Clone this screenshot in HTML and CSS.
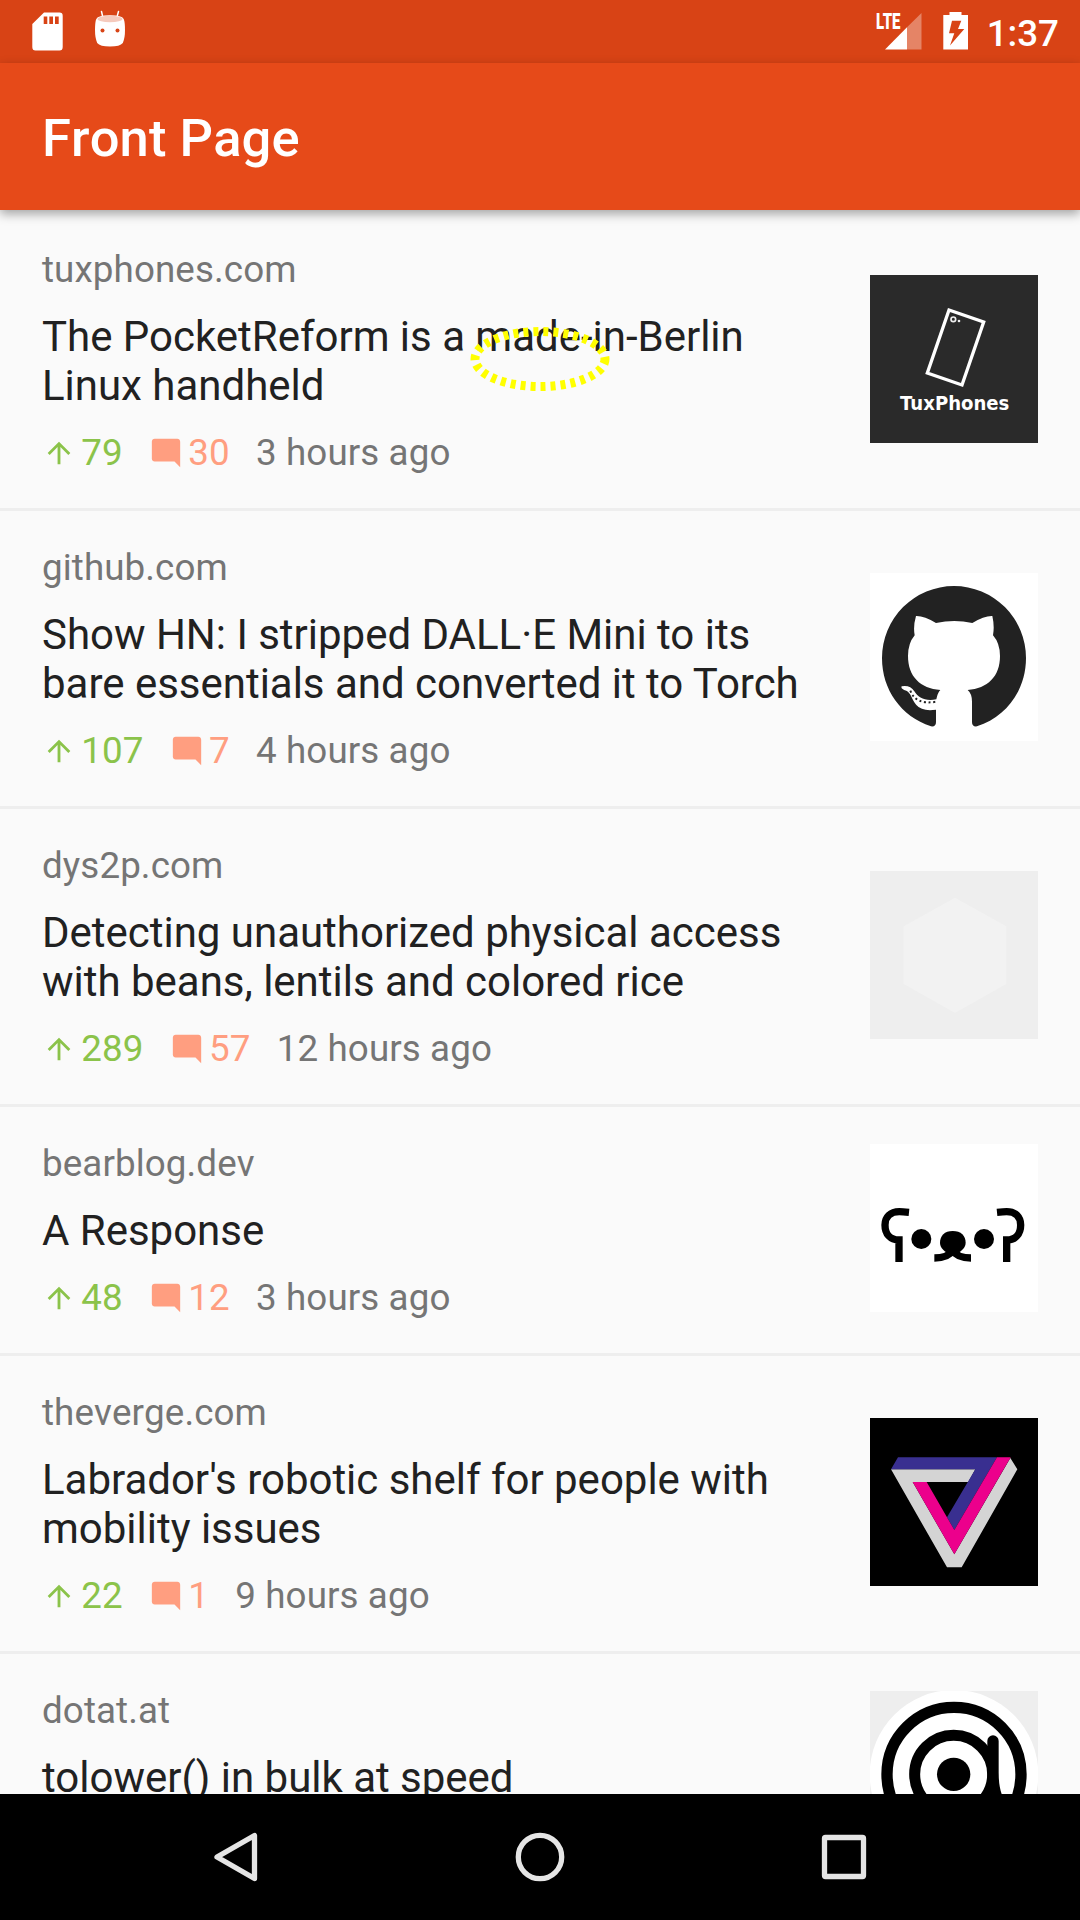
FILE: index.html
```html
<!DOCTYPE html>
<html lang="en">
<head>
<meta charset="utf-8">
<title>Front Page</title>
<link rel="stylesheet" href="styles.css">
</head>
<body>
<svg class="defs" aria-hidden="true">
  <symbol id="up" viewBox="0 0 24 24"><path d="M4 12l1.41 1.41L11 7.83V20h2V7.83l5.58 5.59L20 12l-8-8-8 8z"/></symbol>
  <symbol id="comment" viewBox="0 0 24 24"><path d="M4 2C2.900 2 2 2.900 2 4v12c0 1.100.9 2 2 2h14l4 4V4c0-1.100-.9-2-2-2z"/></symbol>
</svg>
<div class="screen">
  <header class="status">
    <div class="status-left">
      <svg class="sd" viewBox="0 0 31 39"><path fill="#fff" fill-rule="evenodd" d="M12 .5H27.500Q30.700.5 30.700 3.700V35Q30.700 38.500 27.500 38.500H3.500Q.3 38.500.3 35V12ZM11.700 4.500V12H15.300V4.500ZM17.300 4.500V12H21V4.500ZM23 4.500V12H26.700V4.500Z"/></svg>
      <svg class="droid" viewBox="0 0 32 37"><path stroke="#fff" stroke-width="1.500" stroke-linecap="round" d="M7.500 1.500 9 8M24.500 1.500 22.700 8"/><path fill="#fff" d="M2.300 9Q4 5.300 16 5.300T29.700 9Q31 12 31 20T28.800 33Q26 36.500 16 36.500T3.200 33Q1 28 1 20T2.300 9Z"/><ellipse cx="16" cy="9" rx="12.500" ry="3.200" fill="#f5cabd"/><circle cx="8.500" cy="20.500" r="2" fill="#d84315"/><circle cx="23.500" cy="20.500" r="2" fill="#d84315"/></svg>
    </div>
    <div class="status-right">
      <svg class="signal" viewBox="0 0 48 40"><text class="lte" x="0" y="17" textLength="24.500" lengthAdjust="spacingAndGlyphs">LTE</text><path fill="#fff" fill-opacity=".35" d="M31 15.300 45.500 1V37.500H31Z"/><path fill="#fff" d="M9 37.500 31 15.300V37.500Z"/></svg>
      <svg class="battery" viewBox="0 0 26 39"><path fill="#fff" fill-rule="evenodd" d="M6.500 1H18.500V4H25V38.500H.3V4H6.500ZM9 9.700H18.300L15 18H21.300L7 34.500 11.300 22.300H6Z"/></svg>
      <span class="clock">1:37</span>
    </div>
  </header>
  <div class="appbar"><h1>Front Page</h1></div>
  <main class="list">
    <article class="item">
      <div class="body">
        <div class="domain">tuxphones.com</div>
        <h2>The PocketReform is a made-in-Berlin<br>Linux handheld</h2>
        <div class="meta"><span class="stat votes"><svg><use href="#up"/></svg>79</span><span class="stat comments"><svg><use href="#comment"/></svg>30</span><span>3 hours ago</span></div>
      </div>
      <svg class="thumb" viewBox="60 45 504 504"><rect x="60" y="45" width="504" height="504" fill="#2a2a2a"/><path fill="none" stroke="#fff" stroke-width="10" d="M297 150 401 186 336 375 232 339Z"/><circle cx="310" cy="178" r="7" fill="none" stroke="#eee" stroke-width="5"/><circle cx="327" cy="183" r="4" fill="#eee"/><text class="tux" x="150" y="450" textLength="328" lengthAdjust="spacingAndGlyphs">TuxPhones</text></svg>
    </article>
    <article class="item">
      <div class="body">
        <div class="domain">github.com</div>
        <h2>Show HN: I stripped DALL·E Mini to its<br>bare essentials and converted it to Torch</h2>
        <div class="meta"><span class="stat votes"><svg><use href="#up"/></svg>107</span><span class="stat comments"><svg><use href="#comment"/></svg>7</span><span>4 hours ago</span></div>
      </div>
      <svg class="thumb" viewBox="60 39 504 504"><rect x="60" y="39" width="504" height="504" fill="#fff"/><path fill="#222" d="M243 499C153 469 96 389 96 294A216 216 0 0 1 528 294C528 389 471 469 381 499Q366 501 366 486V425Q366 401 353 390C413 385 450 350 450 288Q450 250 429 226Q434 199 427 168Q403 167 367 189Q313 177 258 189Q222 167 198 168Q189 199 194 226Q174 250 174 288C174 350 211 385 271 390Q263 398 259 418C225 424 204 413 193 394Q180 374 155 379Q151 386 169 392C183 398 186 420 199 435Q216 455 258 449V486Q258 501 243 499Z"/><path fill="none" stroke="#222" stroke-width="6" stroke-dasharray="6 8" d="M181 392Q197 436 259 425"/></svg>
    </article>
    <article class="item">
      <div class="body">
        <div class="domain">dys2p.com</div>
        <h2>Detecting unauthorized physical access<br>with beans, lentils and colored rice</h2>
        <div class="meta"><span class="stat votes"><svg><use href="#up"/></svg>289</span><span class="stat comments"><svg><use href="#comment"/></svg>57</span><span>12 hours ago</span></div>
      </div>
      <svg class="thumb" viewBox="60 33 504 504"><rect x="60" y="33" width="504" height="504" fill="#eee"/><path fill="#f2f2f2" d="M315 113 469 199V372L315 459 161 372V199Z"/></svg>
    </article>
    <article class="item short">
      <div class="body">
        <div class="domain">bearblog.dev</div>
        <h2>A Response</h2>
        <div class="meta"><span class="stat votes"><svg><use href="#up"/></svg>48</span><span class="stat comments"><svg><use href="#comment"/></svg>12</span><span>3 hours ago</span></div>
      </div>
      <svg class="thumb" viewBox="60 42 504 504"><rect x="60" y="42" width="504" height="504" fill="#fff"/><g fill="none" stroke="#000" stroke-width="22"><path d="M177 247C167 246 157 245 148 245C121 245 105 261 105 285C105 312 121 330 147 330V396"/><path d="M441 247C451 246 461 245 470 245C497 245 512 261 512 285C512 312 496 330 470 330V396"/><path d="M253 384C285 384 299 376 308 361C317 376 331 384 363 384"/></g><circle cx="214" cy="327" r="30"/><circle cx="402" cy="327" r="30"/><path d="M308 303C333 303 347 317 347 338C347 352 335 366 308 376C281 366 270 352 270 338C270 317 284 303 308 303Z"/></svg>
    </article>
    <article class="item">
      <div class="body">
        <div class="domain">theverge.com</div>
        <h2>Labrador's robotic shelf for people with<br>mobility issues</h2>
        <div class="meta"><span class="stat votes"><svg><use href="#up"/></svg>22</span><span class="stat comments"><svg><use href="#comment"/></svg>1</span><span>9 hours ago</span></div>
      </div>
      <svg class="thumb" viewBox="60 54 504 504"><rect x="60" y="54" width="504" height="504"/><path fill="#d4d4d4" d="M123 208H376L355 246H188L313 463 481 174 502 208 335 502H291Z"/><path fill="#392f90" d="M144 172H441L313 390 291 352 376 208H123Z"/><path fill="#ec008c" d="M441 172H482L313 463 188 246H230L313 390Z"/></svg>
    </article>
    <article class="item short">
      <div class="body">
        <div class="domain">dotat.at</div>
        <h2>tolower() in bulk at speed</h2>
        <div class="meta"></div>
      </div>
      <svg class="thumb" viewBox="60 63 504 504"><rect x="60" y="63" width="504" height="504" fill="#eee"/><circle cx="312" cy="313" r="253" fill="#fff"/><circle cx="311" cy="313" r="50"/><g fill="none" stroke="#000" stroke-width="33"><circle cx="311" cy="313" r="117"/><circle cx="312" cy="313" r="201" stroke-width="34"/><path stroke-linecap="round" stroke-width="34" d="M429 213V313Q430 370 450 400"/></g></svg>
    </article>
  </main>
  <nav class="nav">
    <svg viewBox="0 0 54 54"><path d="M45.500 5.500V48.500L8 27Z"/></svg>
    <svg viewBox="0 0 54 54"><circle cx="27" cy="27" r="21.700"/></svg>
    <svg viewBox="0 0 54 54"><rect x="7.500" y="7.500" width="39" height="39" rx="1"/></svg>
  </nav>
  <svg class="marker" viewBox="0 0 140 66"><ellipse cx="70" cy="33" rx="65" ry="27.500"/></svg>
</div>
</body>
</html>
```
FILE: styles.css
```css
* { box-sizing: border-box; }
body { margin: 0; font-family: Roboto, "Noto Sans", sans-serif; background: #fafafa; }
.defs { display: none; }
.screen { position: relative; width: 1080px; height: 1920px; overflow: hidden; display: flex; flex-direction: column; }
.status { height: 63px; flex: none; background: #d84315; display: flex; justify-content: space-between; align-items: flex-start; padding: 0 21px 0 32px; }
.status-left, .status-right { display: flex; align-items: flex-start; }
.sd { width: 31px; height: 39px; margin-top: 12px; }
.droid { width: 32px; height: 37px; margin: 10px 0 0 31px; fill: none; }
.signal { width: 48px; height: 40px; margin-top: 12px; overflow: visible; }
.lte { font: 900 22px Roboto, sans-serif; fill: #fff; }
.battery { width: 26px; height: 39px; margin: 11px 0 0 19px; }
.clock { font-size: 36.75px; font-weight: 500; line-height: 43px; color: #fff; margin: 12px 0 0 18px; }
.appbar { height: 147px; flex: none; background: #e64a19; display: flex; align-items: center; padding: 2px 42px 0; box-shadow: 0 4px 10px rgba(0, 0, 0, .35); position: relative; z-index: 1; }
h1 { margin: 0; font-size: 52.5px; font-weight: 500; color: #fff; line-height: 62px; font-kerning: none; letter-spacing: .1px; }
.list { flex: 1; min-height: 0; overflow: hidden; }
.item { display: flex; align-items: center; justify-content: space-between; padding: 0 42px; }
.item + .item { box-shadow: inset 0 3px #eee; }
.body { padding: 38px 0 34px; display: flex; flex-direction: column; gap: 21px; white-space: nowrap; }
.domain, .meta { font-size: 36.75px; line-height: 43px; height: 43px; color: #757575; font-kerning: none; letter-spacing: .1px; }
h2 { margin: 0; font-size: 42px; font-weight: 400; line-height: 49px; color: #212121; letter-spacing: -.015px; }
.meta { display: flex; gap: 26.25px; }
.stat { display: flex; align-items: center; gap: 5.25px; }
.stat svg { width: 34px; height: 34px; fill: currentColor; }
.votes { color: #8bc34a; }
.comments { color: #ff9e80; }
.thumb { width: 168px; height: 168px; flex: none; display: block; }
.short .thumb { margin-bottom: 1px; }
.tux { font: 700 59px "DejaVu Sans", sans-serif; fill: #fff; }
.nav { height: 126px; flex: none; background: #000; display: flex; justify-content: center; align-items: center; gap: 250px; position: relative; z-index: 1; }
.nav svg { width: 54px; height: 54px; fill: none; stroke: #e5e5e5; stroke-width: 5.3; stroke-linejoin: round; }
.marker { position: absolute; left: 470px; top: 326px; width: 140px; height: 66px; fill: none; stroke: #ff0; stroke-width: 9; stroke-dasharray: 5 5; z-index: 2; }
```
